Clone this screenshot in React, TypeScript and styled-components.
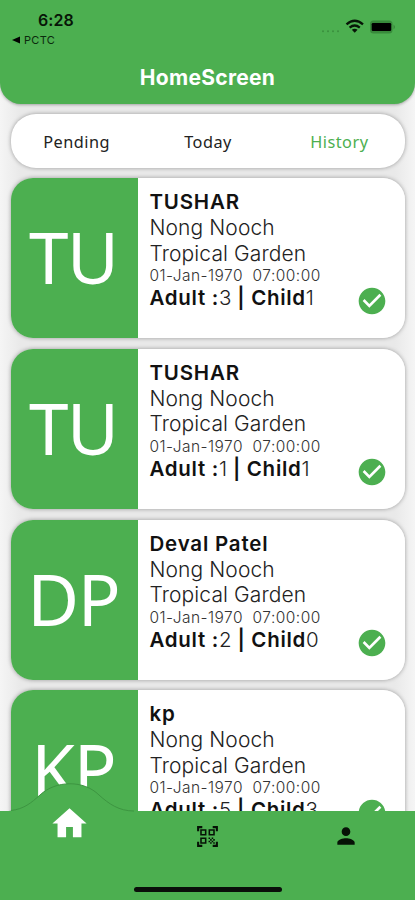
import React from "react";
import styled, { createGlobalStyle } from "styled-components";
import { MdCheckCircle, MdHome, MdPerson, MdQrCodeScanner } from "react-icons/md";

const GREEN = "#4caf50";

const GlobalStyle = createGlobalStyle`
  * { box-sizing: border-box; }
  body { margin: 0; background: #f0f0f0; overflow: hidden; font-family: Inter, sans-serif; }
`;

const Screen = styled.div`
  display: flex;
  flex-direction: column;
  width: 415px;
  height: 900px;
  overflow: hidden;
  background: linear-gradient(90deg, #f5f5f5, #e9e9e9 20px, #e9e9e9 395px, #f5f5f5);
`;

const Header = styled.header`
  flex: none;
  height: 104px;
  background: ${GREEN};
  border-radius: 0 0 21px 21px;
  box-shadow: 0 1px 3px rgba(0, 0, 0, 0.3);
`;

const StatusBar = styled.div`
  display: flex;
  justify-content: space-between;
  height: 48px;
  padding: 9.5px 19px 0 12px;
`;

const Clock = styled.div`
  padding-left: 26px;
  font-size: 16px;
  line-height: 20px;
  font-weight: 600;
  letter-spacing: 0.1px;
  color: #071507;
`;

const BackLink = styled.div`
  display: flex;
  align-items: center;
  gap: 4px;
  height: 21px;
  font-size: 11px;
  letter-spacing: 0.3px;
  color: #0b2a0d;
`;

const StatusIcons = styled.svg`
  width: 76px;
  height: 20px;
  margin-top: 7px;
`;

const Title = styled.h1`
  margin: 0;
  text-align: center;
  color: #fff;
  font-size: 21px;
  line-height: 59px;
  font-weight: 700;
  letter-spacing: 0.3px;
`;

const Tabs = styled.nav`
  flex: none;
  display: grid;
  grid-template-columns: repeat(3, 1fr);
  height: 54px;
  margin: 10px 10px 0 11px;
  background: #fff;
  border-radius: 25px;
  box-shadow: 0 0 4px rgba(0, 0, 0, 0.35);
`;

const Tab = styled.div<{ $active?: boolean }>`
  text-align: center;
  line-height: 57px;
  font-family: "Noto Sans", sans-serif;
  font-size: 16.3px;
  letter-spacing: 0.5px;
  color: ${(p) => (p.$active ? GREEN : "#222")};
`;

const List = styled.main`
  flex: none;
  display: flex;
  flex-direction: column;
  gap: 10.7px;
  height: 643px;
  padding: 10.3px 10px 0 11px;
  overflow: hidden;
`;

const Card = styled.article`
  flex: none;
  display: flex;
  height: 160px;
  border-radius: 22px;
  background: linear-gradient(90deg, ${GREEN} 127.5px, #fff 127.5px);
  box-shadow: 0 0 4px rgba(0, 0, 0, 0.35);
`;

const Initials = styled.div`
  width: 127.5px;
  padding-right: 3px;
  text-align: center;
  color: #fff;
  font-family: "Noto Sans", sans-serif;
  font-size: 71px;
  line-height: 157px;
  letter-spacing: -1.5px;
  white-space: nowrap;
`;

const Details = styled.div`
  flex: 1;
  padding: 11px 0 0 11px;
  white-space: pre;
  color: #222;
`;

const Name = styled.div`
  font-size: 20.5px;
  line-height: 26px;
  font-weight: 600;
  letter-spacing: 0.8px;
  color: #111;
`;

const Place = styled.div`
  font-size: 21px;
  line-height: 25.5px;
  font-weight: 300;
  letter-spacing: 0.1px;
`;

const When = styled.div`
  font-size: 15.5px;
  line-height: 19px;
  font-weight: 300;
  letter-spacing: 0.45px;
  color: #333;
`;

const Guests = styled.div`
  font-size: 20.5px;
  line-height: 26px;
  font-weight: 300;
  b { font-weight: 600; color: #111; letter-spacing: 0.7px; }
`;

const Status = styled.div`
  flex: none;
  width: 50px;
  padding: 107px 0 0 0.5px;
  color: ${GREEN};
  svg { display: block; width: 32px; height: 32px; }
`;

const BottomBar = styled.footer`
  position: relative;
  flex: none;
  display: flex;
  flex-direction: column;
  justify-content: space-between;
  align-items: center;
  height: 89px;
  padding-bottom: 8px;
  background: ${GREEN};
`;

const Bump = styled.svg`
  position: absolute;
  left: 0;
  top: -30px;
  width: 140px;
  height: 32px;
`;

const NavItems = styled.div`
  position: relative;
  display: grid;
  grid-template-columns: repeat(3, 1fr);
  justify-items: center;
  width: 100%;
`;

const NavItem = styled.div<{ $size: number; $top: number }>`
  margin-top: ${(p) => p.$top}px;
  color: ${(p) => (p.$size > 30 ? "#fff" : "#061206")};
  svg { display: block; width: ${(p) => p.$size}px; height: ${(p) => p.$size}px; }
`;

const HomeIndicator = styled.div`
  width: 148px;
  height: 5px;
  border-radius: 3px;
  background: #0a0f0a;
`;

const bookings = [
  { initials: "TU", name: "TUSHAR", adults: 3, children: 1 },
  { initials: "TU", name: "TUSHAR", adults: 1, children: 1 },
  { initials: "DP", name: "Deval Patel", adults: 2, children: 0 },
  { initials: "KP", name: "kp", adults: 5, children: 3 },
];

export default function App() {
  return (
    <>
      <GlobalStyle />
      <Screen>
        <Header>
          <StatusBar>
            <div>
              <Clock>6:28</Clock>
              <BackLink>
                <svg width="8" height="8" viewBox="0 0 8 8"><path d="M0 4 8 .5v7z" /></svg>
                PCTC
              </BackLink>
            </div>
            <StatusIcons viewBox="0 0 76 20">
              <g fill="#3a8f3e">
                <circle cx="3" cy="14.3" r="1" /><circle cx="8" cy="14.3" r="1" />
                <circle cx="13" cy="14.3" r="1" /><circle cx="18" cy="14.3" r="1" />
              </g>
              <g fill="none" stroke="#071507" strokeWidth="2.3">
                <path d="M26.5 7.3Q34.7.3 43 7.3" /><path d="M29.6 10.7q5.1-4.3 10.2 0" />
              </g>
              <path d="m31.8 12.8q2.9-2.2 5.8 0l-2.9 3z" fill="#071507" />
              <rect x="50" y="3.5" width="22.5" height="13" rx="3.5" fill="#388a3b" />
              <path d="M73.5 7.5q3 2.5 0 5z" fill="#388a3b" />
              <rect x="51.7" y="6" width="19.5" height="8" rx="1.2" />
            </StatusIcons>
          </StatusBar>
          <Title>HomeScreen</Title>
        </Header>
        <Tabs>
          <Tab>Pending</Tab>
          <Tab>Today</Tab>
          <Tab $active>History</Tab>
        </Tabs>
        <List>
          {bookings.map((b, i) => (
            <Card key={i}>
              <Initials>{b.initials}</Initials>
              <Details>
                <Name>{b.name}</Name>
                <Place>Nong Nooch</Place>
                <Place>Tropical Garden</Place>
                <When>01-Jan-1970  07:00:00</When>
                <Guests><b>Adult :</b>{b.adults}<b> | Child</b>{b.children}</Guests>
              </Details>
              <Status><MdCheckCircle /></Status>
            </Card>
          ))}
        </List>
        <BottomBar>
          <Bump viewBox="0 0 140 32">
            <path d="M0 30.5C20 30.5 30 23 40 14C56-1 84-1 99 14C109 23 119 30.5 139 30.5V32H0Z" fill={GREEN} />
            <path d="M11 29.5C24 28 31 22 40 14C56-1 84-1 99 14C109 23 119 30 134 30" fill="none" stroke="#3d9541" strokeWidth="1" />
          </Bump>
          <NavItems>
            <NavItem $size={41} $top={-8}><MdHome /></NavItem>
            <NavItem $size={25} $top={13}><MdQrCodeScanner /></NavItem>
            <NavItem $size={26} $top={12}><MdPerson /></NavItem>
          </NavItems>
          <HomeIndicator />
        </BottomBar>
      </Screen>
    </>
  );
}
